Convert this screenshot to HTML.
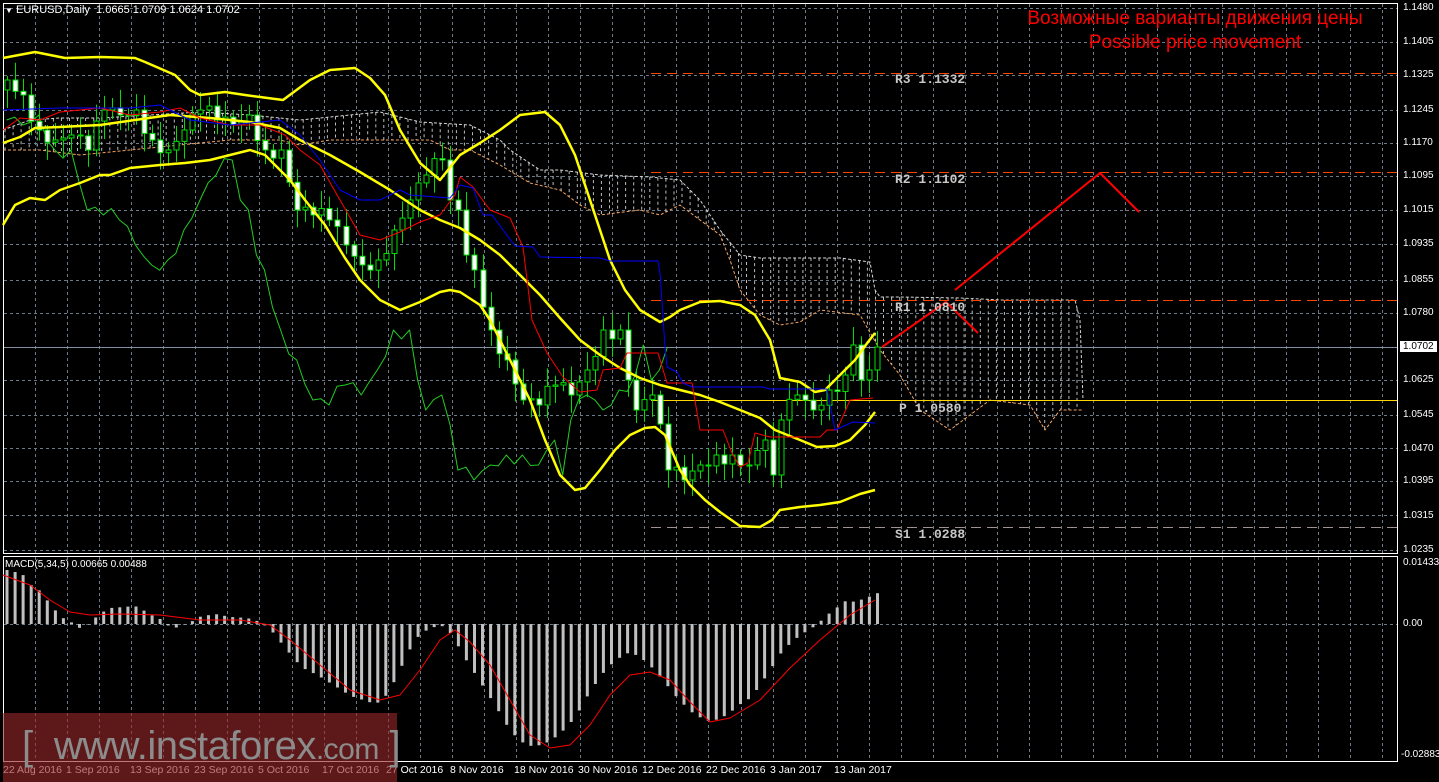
<!DOCTYPE html>
<html><head><meta charset="utf-8"><style>
html,body{margin:0;padding:0;background:#000;width:1439px;height:782px;overflow:hidden}
#w{position:relative;width:1439px;height:782px;font-family:"Liberation Sans",sans-serif}
svg{position:absolute;left:0;top:0}
.t{position:absolute;color:#fff;font-size:10px;white-space:nowrap}
.d{position:absolute;top:764px;color:#fff;font-size:10.5px;white-space:nowrap}
.pv{position:absolute;color:#c8c8c8;font:bold 13px "Liberation Mono",monospace;white-space:nowrap}
</style></head><body><div id="w">
<svg id="s" width="1439" height="782" xmlns="http://www.w3.org/2000/svg"></svg>
<div class="t" style="left:5px;top:4px;font-size:11px"><span style="font-size:8px">&#9660;</span> EURUSD,Daily&nbsp; 1.0665 1.0709 1.0624 1.0702</div>
<div class="t" style="left:5px;top:559px;font-size:10px">MACD(5,34,5) 0.00665 0.00488</div>
<div style="position:absolute;left:990px;top:7px;width:410px;text-align:center;color:#f00;font-size:19px;line-height:24px">Возможные варианты движения цены<br>Possible price movement</div>
<div class="pv" style="left:895px;top:72px">R3 1.1332</div>
<div class="pv" style="left:895px;top:172px">R2 1.1102</div>
<div class="pv" style="left:895px;top:300px">R1 1.0810</div>
<div class="pv" style="left:899px;top:401px">P 1.0580</div>
<div class="pv" style="left:895px;top:527px">S1 1.0288</div>
<div class="t" style="left:1403px;top:2px">1.1480</div>
<div class="t" style="left:1403px;top:36px">1.1405</div>
<div class="t" style="left:1403px;top:69px">1.1325</div>
<div class="t" style="left:1403px;top:104px">1.1245</div>
<div class="t" style="left:1403px;top:137px">1.1170</div>
<div class="t" style="left:1403px;top:170px">1.1095</div>
<div class="t" style="left:1403px;top:204px">1.1015</div>
<div class="t" style="left:1403px;top:238px">1.0935</div>
<div class="t" style="left:1403px;top:274px">1.0855</div>
<div class="t" style="left:1403px;top:307px">1.0780</div>
<div class="t" style="left:1400px;top:341px;background:#fff;color:#000;padding:0 3px">1.0702</div>
<div class="t" style="left:1403px;top:374px">1.0625</div>
<div class="t" style="left:1403px;top:409px">1.0545</div>
<div class="t" style="left:1403px;top:443px">1.0470</div>
<div class="t" style="left:1403px;top:475px">1.0395</div>
<div class="t" style="left:1403px;top:510px">1.0315</div>
<div class="t" style="left:1403px;top:544px">1.0235</div>
<div class="t" style="left:1403px;top:557px">0.01433</div>
<div class="t" style="left:1403px;top:618px">0.00</div>
<div class="t" style="left:1401px;top:749px">-0.02883</div>
<div class="d" style="left:3px">22 Aug 2016</div>
<div class="d" style="left:66px">1 Sep 2016</div>
<div class="d" style="left:130px">13 Sep 2016</div>
<div class="d" style="left:194px">23 Sep 2016</div>
<div class="d" style="left:258px">5 Oct 2016</div>
<div class="d" style="left:322px">17 Oct 2016</div>
<div class="d" style="left:386px">27 Oct 2016</div>
<div class="d" style="left:450px">8 Nov 2016</div>
<div class="d" style="left:514px">18 Nov 2016</div>
<div class="d" style="left:578px">30 Nov 2016</div>
<div class="d" style="left:642px">12 Dec 2016</div>
<div class="d" style="left:706px">22 Dec 2016</div>
<div class="d" style="left:770px">3 Jan 2017</div>
<div class="d" style="left:834px">13 Jan 2017</div>
<div style="position:absolute;left:3px;top:713px;width:394px;height:69px;background:rgba(150,40,40,0.62)"></div>
<div style="position:absolute;left:22px;top:716px;color:#8c8c8c;font-size:40px;line-height:60px;white-space:nowrap;letter-spacing:-0.5px">[&nbsp; www.instaforex<span style="font-size:30px">.com</span> ]</div>
</div>
<script>
(function(){
var s=document.getElementById('s'),h='';
function L(x1,y1,x2,y2,c,w,da){h+='<line x1="'+x1+'" y1="'+y1+'" x2="'+x2+'" y2="'+y2+'" stroke="'+c+'" stroke-width="'+(w||1)+'"'+(da?' stroke-dasharray="'+da+'"':'')+'/>';}
function P(pts,c,w,da){h+='<polyline fill="none" points="'+pts.map(function(p){return p[0]+','+p[1]}).join(' ')+'" stroke="'+c+'" stroke-width="'+(w||1)+'"'+(da?' stroke-dasharray="'+da+'"':'')+' stroke-linejoin="round"/>';}
var gc='#6c7a89';
for(var x=35;x<1397;x+=32.07){L(Math.round(x)+.5,4,Math.round(x)+.5,553,gc,1,'3,3');L(Math.round(x)+.5,557,Math.round(x)+.5,761,gc,1,'3,3');}
[8,42,75,110,143,176,210,244,280,313,347,380,415,448,481,515,550].forEach(function(y){L(4,y+.5,1397,y+.5,gc,1,'3,3');});
L(4,624.5,1397,624.5,gc,1,'3,3');
h+='<rect x="3.5" y="3.5" width="1394" height="550" fill="none" stroke="#fff"/>';
h+='<rect x="3.5" y="556.5" width="1394" height="205" fill="none" stroke="#fff"/>';
function interp(kp,x){for(var i=0;i<kp.length-1;i++){if(x>=kp[i][0]&&x<=kp[i+1][0]){var t=(x-kp[i][0])/(kp[i+1][0]-kp[i][0]);return kp[i][1]+t*(kp[i+1][1]-kp[i][1]);}}return kp[kp.length-1][1];}
var ctop=[[3,130],[30,120],[60,118],[100,118],[150,115],[200,112],[250,115],[300,120],[350,115],[380,112],[420,122],[470,125],[480,130],[500,140],[510,150],[540,170],[560,170],[600,175],[650,177],[680,180],[700,200],[720,230],[740,255],[760,258],[800,258],[840,258],[870,262],[875,290],[880,297],[900,297],[960,298],[1000,300],[1075,300],[1080,320],[1083,400]];
var cbot=[[3,150],[40,150],[80,155],[130,150],[180,145],[230,140],[280,140],[300,145],[330,140],[380,140],[430,140],[450,150],[470,150],[500,165],[530,183],[560,190],[580,205],[600,215],[640,210],[660,215],[680,205],[700,220],[720,235],[730,260],[740,290],[760,315],[780,325],[800,322],[820,310],[860,315],[880,350],[900,375],[920,410],[950,430],[990,400],[1030,405],[1045,430],[1060,410],[1083,410]];
for(var x=5;x<1083;x+=8.06){var a=interp(ctop,x),b=interp(cbot,x);L(x.toFixed(1),a,x.toFixed(1),b,'#bdbdbd',1,'3,3');}
P(ctop,'#d8d8d8',1,'3,2');P(cbot,'#f4a460',1,'3,2');
L(651,73.5,1397,73.5,'#ff4500',1,'10,6');L(651,172.5,1397,172.5,'#ff4500',1,'10,6');L(651,300.5,1397,300.5,'#ff4500',1,'10,6');
L(651,400.5,1397,400.5,'#ffd700',1);L(651,527.5,1397,527.5,'#a09090',1,'10,6');
L(4,347.5,1397,347.5,'#8090a0',1);
var kp=[[0,80],[2,95],[4,130],[6,140],[8,135],[10,150],[12,110],[14,115],[16,110],[18,140],[20,150],[22,130],[24,110],[26,120],[28,125],[30,115],[32,150],[34,150],[36,210],[38,215],[40,220],[42,245],[44,265],[46,260],[48,230],[50,200],[52,175],[54,160],[55,200],[56,210],[57,255],[58,270],[60,330],[62,360],[64,400],[66,405],[68,385],[70,395],[72,370],[74,330],[76,330],[77,380],[78,410],[80,395],[82,470],[84,480],[86,465],[88,455],[90,455],[92,465],[94,440],[95,475],[96,420],[98,395],[100,410],[102,390],[104,375],[105,345],[106,380],[107,370],[108,347]];
var c=[],N=109;
for(var i=0;i<N;i++){var v=interp(kp,i);var isk=kp.some(function(k){return k[0]==i});if(!isk)v+=Math.sin(i*2.7)*9;c.push(v);}
function X(i){return 7+8.06*i;}
var ch=[];for(var i=26;i<N;i++)ch.push([(X(i)-210).toFixed(1),c[i].toFixed(1)]);
P(ch,'#22cc22',1);
for(var i=0;i<N;i++){var o=i?c[i-1]:c[0]+10,cl=c[i];var hi=Math.min(o,cl)-4-Math.abs(Math.sin(i*1.9))*14,lo=Math.max(o,cl)+4+Math.abs(Math.cos(i*1.3))*14;var x=Math.round(X(i))+.5;
L(x,hi,x,lo,'#00e000',1);var y1=Math.min(o,cl),y2=Math.max(o,cl);if(y2-y1<1)y2=y1+1;
h+='<rect x="'+(x-2.5)+'" y="'+y1+'" width="5" height="'+(y2-y1)+'" fill="'+(cl<o?'#000':'#fff')+'" stroke="#00e000"/>';}
P([[3,58],[35,52],[65,58],[100,57],[135,58],[145,62],[175,75],[190,90],[200,95],[225,92],[245,95],[260,97],[283,100],[310,80],[330,70],[355,68],[370,78],[385,95],[400,130],[420,163],[440,180],[460,155],[480,143],[500,130],[520,115],[545,112],[560,125],[575,155],[590,200],[610,260],[625,290],[640,310],[660,322],[670,317],[680,310],[700,302],[720,301],[740,305],[755,315],[770,340],[780,378],[800,382],[815,392],[825,390],[840,375],[855,360],[868,342],[875,333]],'#ffff00',2.5);
P([[3,143],[20,137],[35,128],[60,127],[100,125],[135,120],[170,115],[210,118],[250,122],[280,128],[300,140],[330,155],[360,172],[390,190],[420,210],[440,220],[460,228],[480,240],[500,255],[520,275],[540,295],[560,318],[580,340],[600,355],[620,368],[640,378],[660,385],[680,390],[700,395],[720,402],[740,410],[760,418],[775,430],[800,440],[817,447],[835,446],[850,440],[865,425],[875,412]],'#ffff00',2.5);
P([[3,225],[15,205],[30,198],[45,200],[60,190],[80,183],[100,175],[110,175],[130,168],[160,165],[185,163],[210,160],[230,155],[250,150],[265,155],[280,170],[290,180],[305,200],[325,225],[345,258],[360,280],[380,300],[400,310],[420,302],[440,292],[450,290],[460,292],[480,305],[490,320],[500,340],[515,370],[530,400],[545,440],[560,475],[575,490],[585,488],[600,470],[615,450],[630,435],[645,428],[655,427],[665,435],[680,470],[690,485],[705,500],[720,512],[740,526],[760,527],[772,520],[780,510],[800,507],[820,505],[840,502],[860,494],[875,490]],'#ffff00',2.5);
P([[3,130],[20,118],[40,120],[60,112],[80,110],[100,108],[130,115],[160,112],[180,108],[200,118],[230,125],[260,125],[285,135],[300,150],[320,165],[340,200],[360,235],[380,240],[400,232],[420,222],[440,215],[455,195],[460,177],[473,187],[490,210],[510,218],[523,247],[532,320],[547,353],[563,377],[580,392],[597,390],[603,370],[620,368],[627,353],[658,353],[667,383],[692,383],[700,430],[723,430],[732,453],[740,467],[748,463],[755,433],[770,437],[820,437],[827,430],[837,430],[850,400],[873,398]],'#ff0000',1);
P([[3,110],[60,108],[130,108],[160,105],[190,120],[230,125],[280,120],[300,135],[320,160],[340,190],[360,200],[380,200],[400,190],[410,195],[450,198],[460,185],[473,188],[483,215],[492,215],[515,246],[533,247],[540,257],[600,258],[610,261],[658,261],[660,273],[665,347],[667,367],[677,372],[683,383],[692,387],[763,387],[770,389],[827,389],[835,430],[853,422],[875,423]],'#0000ff',1);
P([[882,347],[946,302],[978,333]],'#ff0000',2);P([[955,290],[1100,173],[1139,212]],'#ff0000',2);
var mk=[[7,570],[15,572],[23,575],[31,585],[39,590],[47,600],[55,610],[63,618],[71,622],[79,628],[87,625],[95,618],[103,612],[111,608],[135,606],[143,610],[151,615],[159,618],[167,625],[175,628],[183,625],[191,622],[199,617],[215,614],[231,617],[247,618],[255,620],[263,624],[271,630],[279,640],[287,650],[295,660],[303,668],[319,676],[335,686],[351,696],[375,704],[383,700],[391,688],[399,672],[407,655],[415,640],[423,632],[439,625],[447,628],[455,640],[463,655],[479,680],[495,705],[511,732],[527,746],[543,745],[559,735],[575,718],[591,690],[607,668],[623,655],[631,652],[647,662],[663,680],[679,700],[695,715],[711,722],[727,715],[743,702],[751,698],[767,675],[783,650],[799,636],[815,626],[831,612],[847,600],[855,602],[871,596],[878,593]];
for(var i=0;i<N;i++){var x=X(i),y=interp(mk,x);var y1=Math.min(y,624),y2=Math.max(y,624);h+='<rect x="'+(x-1.5).toFixed(1)+'" y="'+y1.toFixed(1)+'" width="3" height="'+(y2-y1).toFixed(1)+'" fill="#c0c0c0"/>';}
P([[3,575],[30,585],[50,600],[70,612],[90,615],[120,614],[160,615],[200,620],[240,620],[270,625],[290,640],[320,665],[350,690],[380,700],[400,695],[420,670],[440,640],[455,630],[470,642],[490,665],[510,700],[530,735],[550,748],[570,745],[590,725],[610,695],[630,675],[650,672],[670,680],[690,702],[710,722],[730,718],[760,700],[790,668],[820,640],[850,615],[875,600]],'#ff0000',1);
s.innerHTML=h;
})();
</script>
</body></html>
